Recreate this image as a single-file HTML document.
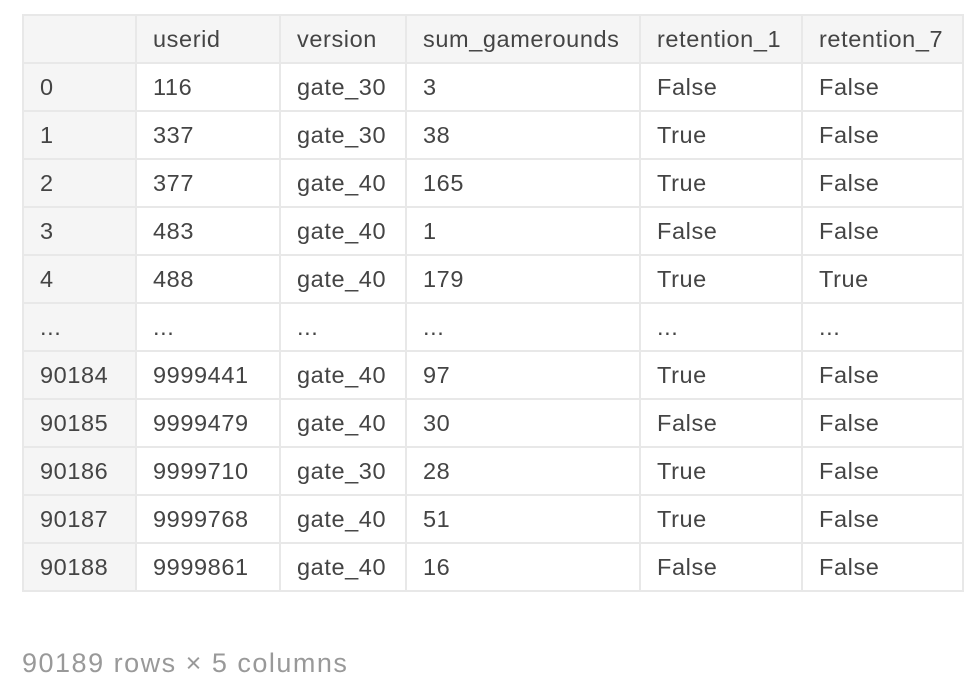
<!DOCTYPE html>
<html><head><meta charset="utf-8"><style>
body{margin:0;background:#fff;font-family:"Liberation Sans",sans-serif;}
table{position:absolute;left:22px;top:14px;border-collapse:collapse;table-layout:fixed;width:940px;}
td,th{border:2px solid #e8e8e8;height:48px;padding:0 0 0 16px;font-size:23.5px;color:#444;font-weight:normal;text-align:left;white-space:nowrap;box-sizing:border-box;letter-spacing:0.6px}
tr:first-child th{background:#f5f5f5;}
td:first-child,th:first-child{background:#f5f5f5;}
.f{position:absolute;left:22px;top:648px;font-size:27px;color:#999;letter-spacing:1.5px}
</style></head><body>
<table>
<colgroup><col style="width:113px"><col style="width:144px"><col style="width:126px"><col style="width:234px"><col style="width:162px"><col style="width:161px"></colgroup>
<tr><th></th><th>userid</th><th>version</th><th>sum_gamerounds</th><th>retention_1</th><th>retention_7</th></tr>
<tr><td>0</td><td>116</td><td>gate_30</td><td>3</td><td>False</td><td>False</td></tr>
<tr><td>1</td><td>337</td><td>gate_30</td><td>38</td><td>True</td><td>False</td></tr>
<tr><td>2</td><td>377</td><td>gate_40</td><td>165</td><td>True</td><td>False</td></tr>
<tr><td>3</td><td>483</td><td>gate_40</td><td>1</td><td>False</td><td>False</td></tr>
<tr><td>4</td><td>488</td><td>gate_40</td><td>179</td><td>True</td><td>True</td></tr>
<tr><td>...</td><td>...</td><td>...</td><td>...</td><td>...</td><td>...</td></tr>
<tr><td>90184</td><td>9999441</td><td>gate_40</td><td>97</td><td>True</td><td>False</td></tr>
<tr><td>90185</td><td>9999479</td><td>gate_40</td><td>30</td><td>False</td><td>False</td></tr>
<tr><td>90186</td><td>9999710</td><td>gate_30</td><td>28</td><td>True</td><td>False</td></tr>
<tr><td>90187</td><td>9999768</td><td>gate_40</td><td>51</td><td>True</td><td>False</td></tr>
<tr><td>90188</td><td>9999861</td><td>gate_40</td><td>16</td><td>False</td><td>False</td></tr>
</table>
<div class="f">90189 rows × 5 columns</div>
</body></html>
